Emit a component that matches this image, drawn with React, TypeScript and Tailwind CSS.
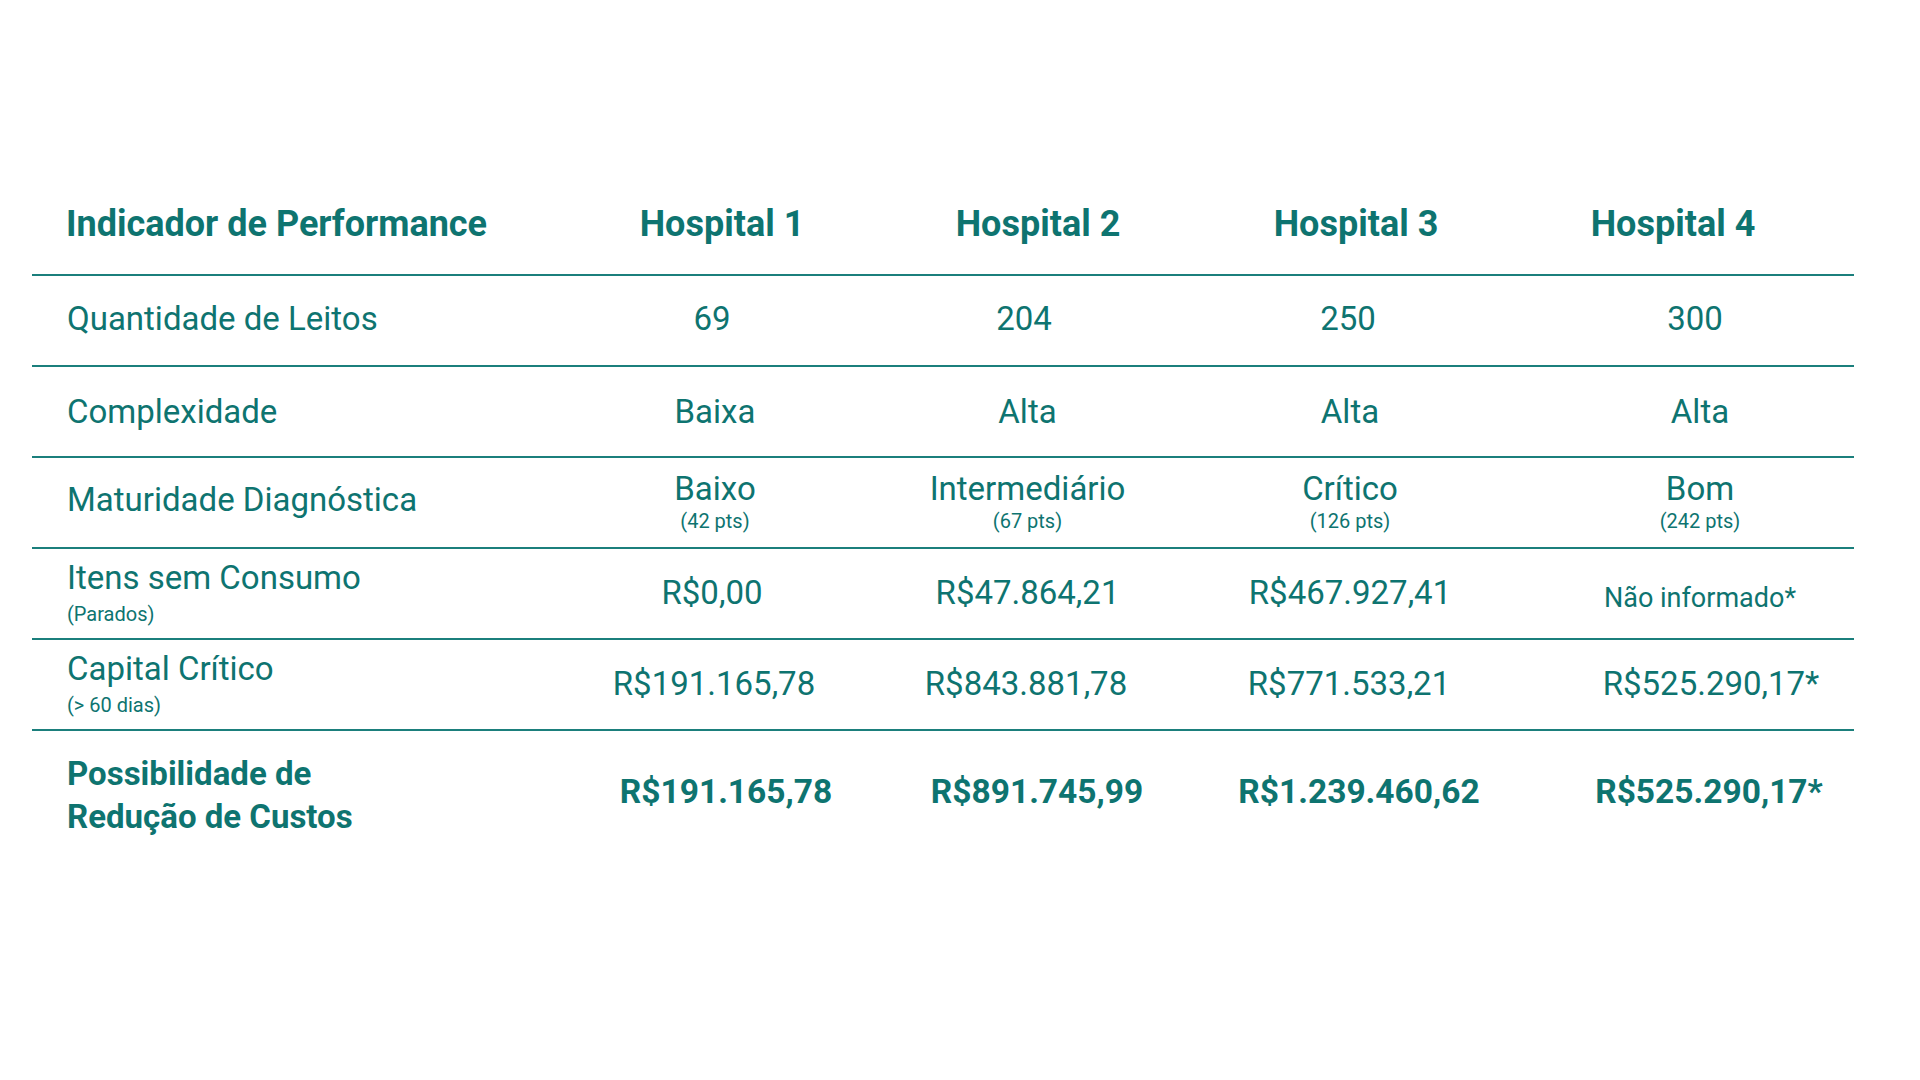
import React from "react";

type Cell = { main: string; sub?: string; small?: boolean; cls?: string };

const colShift = ["pr-[6px]", "pr-[13px]", "", "pl-[38px]"];

const rows: { label: string; sub?: string; cells: Cell[]; lcls?: string }[] = [
  {
    label: "Quantidade de Leitos",
    lcls: "pb-[4px]",
    cells: [
      { main: "69", cls: "pr-[12px] pb-[4px]" },
      { main: "204", cls: "pr-[20px] pb-[4px]" },
      { main: "250", cls: "pr-[4px] pb-[4px]" },
      { main: "300", cls: "pl-[28px] pb-[4px]" },
    ],
  },
  {
    label: "Complexidade",
    cells: [{ main: "Baixa" }, { main: "Alta" }, { main: "Alta" }, { main: "Alta" }],
  },
  {
    label: "Maturidade Diagnóstica",
    lcls: "pb-[5px] pl-[2px]",
    cells: [
      { main: "Baixo", sub: "(42 pts)", cls: "pb-[3px]" },
      { main: "Intermediário", sub: "(67 pts)", cls: "pb-[3px]" },
      { main: "Crítico", sub: "(126 pts)", cls: "pb-[3px]" },
      { main: "Bom", sub: "(242 pts)", cls: "pb-[3px]" },
    ],
  },
  {
    label: "Itens sem Consumo",
    sub: "(Parados)",
    lcls: "pb-[3px]",
    cells: [
      { main: "R$0,00", cls: "pr-[12px] pb-[2px]" },
      { main: "R$47.864,21", cls: "pb-[2px]" },
      { main: "R$467.927,41", cls: "pb-[2px]" },
      { main: "Não informado*", small: true, cls: "pt-[3px]" },
    ],
  },
  {
    label: "Capital Crítico",
    sub: "(> 60 dias)",
    lcls: "pb-[3px]",
    cells: [
      { main: "R$191.165,78", cls: "pr-[8px] pb-[2px]" },
      { main: "R$843.881,78", cls: "pr-[16px] pb-[2px]" },
      { main: "R$771.533,21", cls: "pr-[2px] pb-[2px]" },
      { main: "R$525.290,17*", cls: "pl-[60px] pb-[2px]" },
    ],
  },
];

const cols = "grid grid-cols-[528px_316px_316px_316px_346px]";

export default function App() {
  return (
    <div className="w-[1920px] h-[1080px] bg-white font-[family-name:Roboto,sans-serif] text-[#0e7470] overflow-hidden">
      <div className="ml-[32px] w-[1822px] pt-[174px]">
        {/* header */}
        <div className={`${cols} h-[102px] items-center border-b-2 border-[#1b7f7c] font-bold text-[36px] leading-[42px]`}>
          <div className="pl-[34px]">Indicador de Performance</div>
          <div className="text-center pl-[8px]">Hospital 1</div>
          <div className="text-center pl-[8px]">Hospital 2</div>
          <div className="text-center pl-[12px]">Hospital 3</div>
          <div className="text-center pr-[16px]">Hospital 4</div>
        </div>
        {rows.map((r, i) => (
          <div key={i} className={`${cols} h-[91px] items-center border-b-2 border-[#1b7f7c]`}>
            <div className={`pl-[35px] flex flex-col ${r.lcls ?? ""}`}>
              <span className="text-[33px] leading-[38px]">{r.label}</span>
              {r.sub && <span className="text-[20px] leading-[22px] mt-[6px]">{r.sub}</span>}
            </div>
            {r.cells.map((c, j) => (
              <div key={j} className={`flex flex-col items-center ${c.cls && /p[lr]-/.test(c.cls) ? "" : colShift[j]} ${c.cls ?? ""}`}>
                <span className={c.small ? "text-[27px] leading-[38px] mt-[5px]" : "text-[33px] leading-[38px]"}>{c.main}</span>
                {c.sub && <span className="text-[20px] leading-[22px] mt-[2px]">{c.sub}</span>}
              </div>
            ))}
          </div>
        ))}
        {/* total */}
        <div className={`${cols} h-[130px] items-center font-bold`}>
          <div className="pl-[35px] pb-[3px] text-[33px] leading-[43px]">
            <div>Possibilidade de</div>
            <div>Redução de Custos</div>
          </div>
          <div className="text-center text-[33.5px] leading-[40px] pl-[16px] pb-[8px]">R$191.165,78</div>
          <div className="text-center text-[33.5px] leading-[40px] pl-[6px] pb-[8px]">R$891.745,99</div>
          <div className="text-center text-[33.5px] leading-[40px] pl-[18px] pb-[8px]">R$1.239.460,62</div>
          <div className="text-center text-[33.5px] leading-[40px] pl-[56px] pb-[8px]">R$525.290,17*</div>
        </div>
      </div>
    </div>
  );
}
